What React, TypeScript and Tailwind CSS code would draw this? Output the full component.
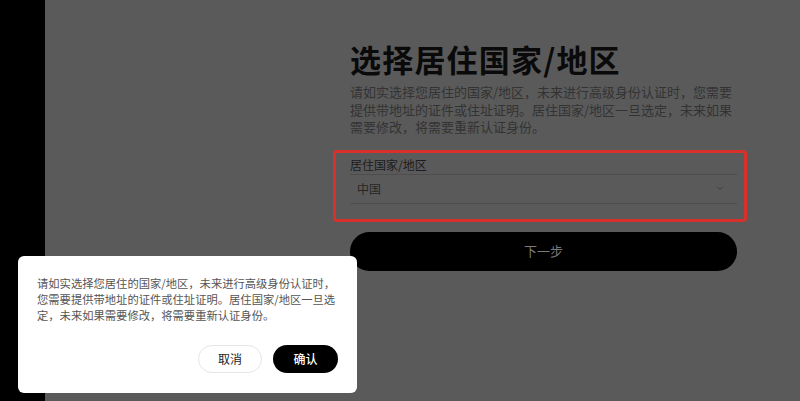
import React from "react";

export default function App() {
  const font = { fontFamily: '"Noto Sans CJK SC", "Noto Sans", sans-serif' };
  return (
    <div className="relative w-[800px] h-[401px] overflow-hidden flex bg-[#5a5a5a]" style={font}>
      <div className="w-[45px] h-full bg-black shrink-0" />
      <div className="flex-1 flex flex-col pl-[305px] pt-[40px]">
        <h1 className="text-[31px] leading-[38px] font-bold text-[#0a0a0a] tracking-[1.2px]">选择居住国家/地区</h1>
        <p className="mt-[5px] text-[13px] leading-[17.5px] text-[#333] w-[400px]">
          请如实选择您居住的国家/地区，未来进行高级身份认证时，您需要
          <br />
          提供带地址的证件或住址证明。居住国家/地区一旦选定，未来如果
          <br />
          需要修改，将需要重新认证身份。
        </p>
        <div className="mt-[21px] text-[12px] leading-[16px] text-[#1c1c1c]">居住国家/地区</div>
        <div className="mt-[1px] w-[387px] h-[30px] border-y border-[#4e4e4e] flex items-center justify-between pl-[7px] pr-[13px]">
          <span className="text-[12px] text-[#262626]">中国</span>
          <svg width="8" height="5" viewBox="0 0 8 5" fill="none">
            <path d="M1 1l3 2.5L7 1" stroke="#404040" strokeWidth="1" />
          </svg>
        </div>
        <button className="mt-[28px] w-[387px] h-[39px] rounded-full bg-black text-[13px] text-[#7a7a7a]">下一步</button>
      </div>

      <div className="absolute left-[333px] top-[150px] w-[414px] h-[72px] border-[3px] border-[#d8302b] rounded-[4px]" />

      <div className="absolute left-[18px] top-[256px] w-[339px] h-[137px] bg-white rounded-[6px] px-[19px] pt-[19px] pb-[20px] flex flex-col justify-between">
        <p className="text-[11.3px] leading-[16px] text-[#555]">
          请如实选择您居住的国家/地区，未来进行高级身份认证时，
          <br />
          您需要提供带地址的证件或住址证明。居住国家/地区一旦选
          <br />
          定，未来如果需要修改，将需要重新认证身份。
        </p>
        <div className="flex justify-end gap-[11px]">
          <button className="w-[64px] h-[28px] rounded-full border border-[#e6e6e6] bg-white text-[12px] text-[#222]">取消</button>
          <button className="w-[65px] h-[28px] rounded-full bg-black text-[12px] font-medium text-white">确认</button>
        </div>
      </div>
    </div>
  );
}
